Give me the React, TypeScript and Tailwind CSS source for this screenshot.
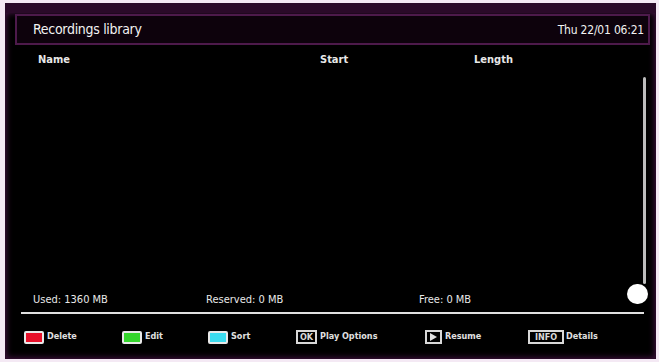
const font = { fontFamily: '"Liberation Sans Narrow", "DejaVu Sans Condensed", "Liberation Sans", sans-serif' }

function Key({ color, w = 20 }: { color: string; w?: number }) {
  return <span className={`inline-block h-[13px] rounded-[2px] border-2 border-[#e8e8e8] ${color}`} style={{ width: w }} />
}

function LabelKey({ text, w }: { text: string; w: number }) {
  return (
    <span
      className="inline-flex h-[14px] items-center justify-center border-2 border-[#d8d8d8] bg-black text-[9px] font-bold leading-none text-[#d8d8d8]"
      style={{ width: w }}
    >
      {text}
    </span>
  )
}

export default function App() {
  return (
    <div className="w-[659px] h-[362px] bg-[#f4e9f4] pt-[3px] pl-[5px] pr-[3px] pb-[3px]" style={font}>
      <div className="h-full w-full flex flex-col bg-black border-t-[10px] border-[#2a0a29] border-x border-b shadow-[inset_0_0_6px_#4a1448] pl-[9px] pr-[5px]">
        {/* title bar */}
        <div className="h-[31px] mt-px flex items-center justify-between border-2 border-[#4d1a4b] bg-[#0d020c] px-4 text-[#f2f2f2]">
          <span className="text-[14px] tracking-[-0.3px]">Recordings library</span>
          <span className="text-[12px] -mr-3 tracking-[-0.2px]">Thu 22/01 06:21</span>
        </div>

        {/* column header */}
        <div className="flex h-[14px] mt-[8px] items-center text-[11px] font-semibold text-[#e8e8e8]">
          <span className="ml-[23px] w-[282px]">Name</span>
          <span className="w-[154px]">Start</span>
          <span>Length</span>
        </div>

        {/* list body + scrollbar */}
        <div className="flex flex-1">
          <div className="flex flex-1 flex-col justify-end">
            <div className="flex text-[11px] text-[#e8e8e8] ml-[18px] -mb-[2px]">
              <span className="w-[173px]">Used: 1360 MB</span>
              <span className="w-[213px]">Reserved: 0 MB</span>
              <span>Free: 0 MB</span>
            </div>
          </div>
          <div className="flex w-[24px] flex-col items-center justify-end mr-[1px] pb-[2px]">
            <div className="h-[207px] w-[3px] translate-x-[7px] rounded bg-[#bdbdbd]" />
            <div className="h-[20px] w-[21px] rounded-full bg-white" />
          </div>
        </div>

        <div className="h-[2px] ml-[6px] mr-[6px] mt-[6px] bg-[#e0e0e0]" />

        {/* key legend */}
        <div className="flex h-[44px] items-center pt-[2px] text-[9px] font-semibold text-[#e0e0e0] ml-[9px]">
          <span className="flex w-[98px] items-center gap-[3px]"><Key color="bg-[#e8102a]" />Delete</span>
          <span className="flex w-[86px] items-center gap-[3px]"><Key color="bg-[#34d62c]" />Edit</span>
          <span className="flex w-[88px] items-center gap-[3px]"><Key color="bg-[#3cdcef]" />Sort</span>
          <span className="flex w-[129px] items-center gap-[3px]"><LabelKey text="OK" w={21} />Play Options</span>
          <span className="flex w-[103px] items-center gap-[3px]">
            <span className="inline-flex h-[14px] w-[17px] items-center justify-center border-2 border-[#d8d8d8]">
              <svg width="7" height="8" viewBox="0 0 7 8"><path d="M0 0L7 4L0 8Z" fill="#e0e0e0" /></svg>
            </span>
            Resume
          </span>
          <span className="flex items-center gap-[2px]"><LabelKey text="INFO" w={36} />Details</span>
        </div>
      </div>
    </div>
  )
}
